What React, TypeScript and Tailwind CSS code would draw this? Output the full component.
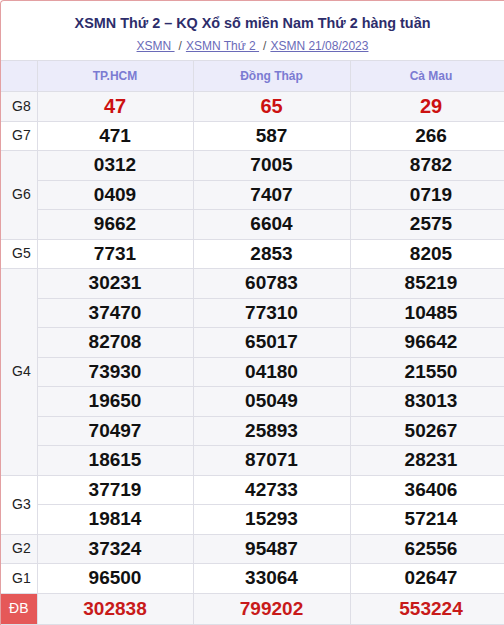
import React from 'react';

type Prize = { label: string; values: string[][]; big?: boolean };

const prizes: Prize[] = [
  { label: 'G8', values: [['47', '65', '29']], big: true },
  { label: 'G7', values: [['471', '587', '266']] },
  { label: 'G6', values: [['0312', '7005', '8782'], ['0409', '7407', '0719'], ['9662', '6604', '2575']] },
  { label: 'G5', values: [['7731', '2853', '8205']] },
  {
    label: 'G4',
    values: [
      ['30231', '60783', '85219'],
      ['37470', '77310', '10485'],
      ['82708', '65017', '96642'],
      ['73930', '04180', '21550'],
      ['19650', '05049', '83013'],
      ['70497', '25893', '50267'],
      ['18615', '87071', '28231'],
    ],
  },
  { label: 'G3', values: [['37719', '42733', '36406'], ['19814', '15293', '57214']] },
  { label: 'G2', values: [['37324', '95487', '62556']] },
  { label: 'G1', values: [['96500', '33064', '02647']] },
];

const special = ['302838', '799202', '553224'];

export default function App() {
  return (
    <div className="w-[504px] h-[625px] overflow-hidden bg-white font-['Liberation_Sans',Arial,sans-serif]">
      <div className="w-[512px] border-l border-t border-[#e3a0a2] rounded-tl-[4px]">
        <div className="h-[59px] flex flex-col items-center pt-[12px] pr-[8px]">
          <h1 className="text-[14.4px] leading-[20px] font-bold text-[#2d2d6b]">
            XSMN Thứ 2 – KQ Xổ số miền Nam Thứ 2 hàng tuần
          </h1>
          <div className="mt-[5px] text-[12px] leading-[16px] text-[#6a6ab8]">
            <a className="underline">XSMN </a>
            <span className="mx-[4px] text-[#555]">/</span>
            <a className="underline">XSMN Thứ 2 </a>
            <span className="mx-[4px] text-[#555]">/</span>
            <a className="underline">XSMN 21/08/2023</a>
          </div>
        </div>
        <table className="w-[511px] border-collapse table-fixed">
          <colgroup>
            <col className="w-[36px]" />
            <col className="w-[156px]" />
            <col className="w-[157px]" />
            <col className="w-[162px]" />
          </colgroup>
          <thead>
            <tr className="bg-[#ececfa] h-[31px]">
              <th className="border border-[#dedee6] border-l-0"></th>
              <th className="border border-[#dedee6] text-[12px] font-bold text-[#7b7bd2]">TP.HCM</th>
              <th className="border border-[#dedee6] text-[12px] font-bold text-[#7b7bd2]">Đồng Tháp</th>
              <th className="border border-[#dedee6] text-[12px] font-bold text-[#7b7bd2]">Cà Mau</th>
            </tr>
          </thead>
          <tbody>
            {prizes.map((p, pi) => {
              const bg = pi % 2 === 0 ? 'bg-[#f6f6f9]' : 'bg-white';
              return p.values.map((row, ri) => (
                <tr key={p.label + ri} className={`${bg} h-[29.5px]`}>
                  {ri === 0 && (
                    <td
                      rowSpan={p.values.length}
                      className="border border-[#dedee6] border-l-0 text-[14px] text-[#222] pl-[11px]"
                    >
                      {p.label}
                    </td>
                  )}
                  {row.map((v, ci) => (
                    <td
                      key={ci}
                      className={
                        p.big
                          ? 'border border-[#dedee6] text-center text-[20px] leading-[20px] font-bold text-[#cc1111]'
                          : 'border border-[#dedee6] text-center text-[19px] leading-[20px] font-bold text-[#111]'
                      }
                    >
                      {v}
                    </td>
                  ))}
                </tr>
              ));
            })}
            <tr className="bg-[#f6f6f9] h-[31px]">
              <td className="border border-[#dedee6] border-l-0 bg-[#e55858] text-white text-[14px] text-center">ĐB</td>
              {special.map((v) => (
                <td key={v} className="border border-[#dedee6] text-center text-[19px] leading-[20px] font-bold text-[#c81a1a]">
                  {v}
                </td>
              ))}
            </tr>
          </tbody>
        </table>
      </div>
    </div>
  );
}
